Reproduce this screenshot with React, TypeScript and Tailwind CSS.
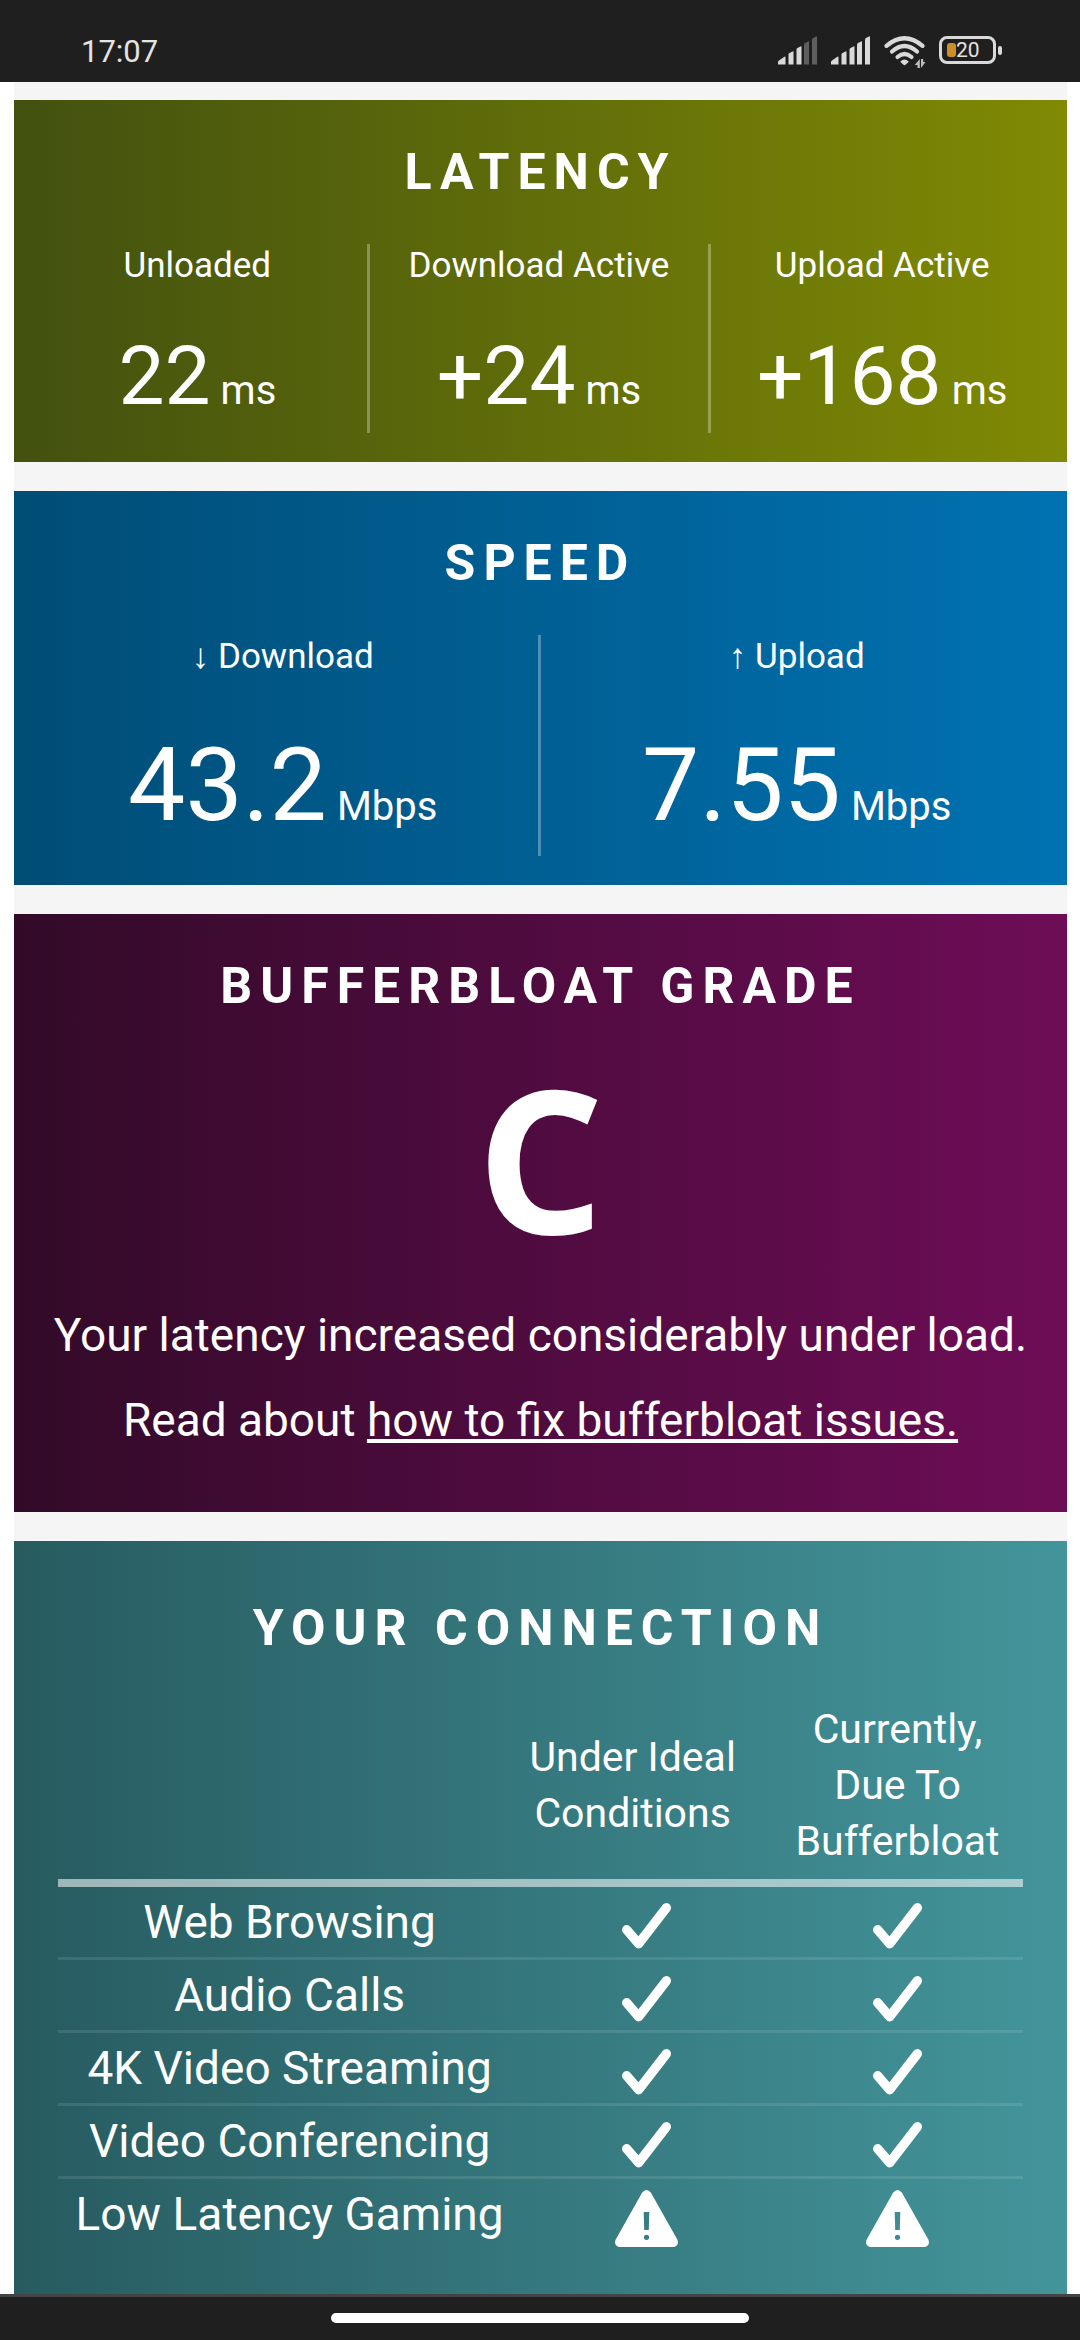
import type { ReactNode } from "react";

type Metric = { label: string; value: string };

const latency: Metric[] = [
  { label: "Unloaded", value: "22" },
  { label: "Download Active", value: "+24" },
  { label: "Upload Active", value: "+168" },
];

const speed: Metric[] = [
  { label: "↓ Download", value: "43.2" },
  { label: "↑ Upload", value: "7.55" },
];

const activities = [
  { name: "Web Browsing", ideal: true, current: true },
  { name: "Audio Calls", ideal: true, current: true },
  { name: "4K Video Streaming", ideal: true, current: true },
  { name: "Video Conferencing", ideal: true, current: true },
  { name: "Low Latency Gaming", ideal: false, current: false },
];

function Signal({ weak = false }: { weak?: boolean }) {
  const dim = weak ? "#5e5e5e" : "#d9d9d9";
  return (
    <svg width="40" height="30" viewBox="0 0 40 30" fill="#d9d9d9" aria-hidden="true">
      <path d="M0 28.5V26q0-1 1-1.500L6 21q1.500-1 1.500.5v7Z" />
      <path d="M10.500 28.500V18.500q0-1 1-1.500l3-1.500q1-.5 1 .5v12.500Z" />
      <path d="M18.500 28.500V13.500q0-1 1-1.500l3-1.500q1-.5 1 .5v17.500Z" />
      <path fill={dim} d="M26 28.500V8.500q0-1 1-1.500l3-1.500q1-.5 1 .5v22.500Z" />
      <path fill={dim} d="M34 28.500V3.500q0-1 1-1.500l3-1.500q1-.5 1 .5v27.500Z" />
    </svg>
  );
}

function Wifi() {
  return (
    <svg width="42" height="34" viewBox="0 0 42 34" fill="none" stroke="#d9d9d9" strokeLinecap="round" aria-hidden="true">
      <path strokeWidth="4.200" d="M2.500 9.800Q20.500-5.400 38.500 9.800" />
      <path strokeWidth="4.200" d="M8 15.500Q20.500 4.500 33 15.500" />
      <path strokeWidth="4.200" d="M13.500 21Q20.500 15 27.500 21" />
      <path fill="#d9d9d9" stroke="none" d="M16.200 25.700q4.300-4.200 8.600 0L21.500 28.800q-1 .9-2 0Z" />
      <path fill="#bdbdbd" stroke="none" d="M35.800 23v9h-2.300v-3h-2.800ZM37 32v-9h2.200v3h2.300Z" />
    </svg>
  );
}

function StatusBar() {
  return (
    <header className="flex h-[82px] items-start justify-between bg-[#1f1f1f] pr-[78px] pl-[81px] text-[#e4e4e4]">
      <time className="mt-8 text-[31px] leading-10">17:07</time>
      <div className="mt-9 flex items-start gap-[13px]">
        <Signal weak />
        <Signal />
        <Wifi />
        <div className="flex items-center gap-0.5">
          <div className="flex h-7 w-[57px] items-center rounded-[8px] border-3 border-[#d9d9d9] pl-[5px]">
            <span className="h-3.5 w-[9px] rounded-[3px] bg-[#cd8e28]" />
            <span className="text-[21px] leading-none">20</span>
          </div>
          <span className="h-[9px] w-1 rounded-[2px] bg-[#d9d9d9]" />
        </div>
      </div>
    </header>
  );
}

function Title({ children }: { children: ReactNode }) {
  return (
    <h2 className="text-center text-[50px] leading-[62px] font-bold tracking-[8px] uppercase">{children}</h2>
  );
}

function Check() {
  return (
    <svg className="mx-auto block" width="49" height="46" viewBox="0 0 49 46" fill="none" role="img" aria-label="Good">
      <path d="M4.700 26.800 16.700 40.700 44.300 4.800" stroke="#fff" strokeWidth="9.400" strokeLinecap="round" strokeLinejoin="round" />
    </svg>
  );
}

function Warning() {
  return (
    <svg className="mx-auto block" width="63" height="57" viewBox="0 0 63 57" fill="#fff" role="img" aria-label="Poor">
      <path
        fillRule="evenodd"
        d="M27.200 2.500Q31.500-2.500 35.800 2.500L62.300 49.500Q64.500 55.500 59 57H4Q-1.500 55.500.7 49.500ZM28.700 22H34.300L33.800 40H29.200ZM31.500 44.700a2.600 2.600 0 1 0 0 5.200a2.600 2.600 0 1 0 0-5.200Z"
      />
    </svg>
  );
}

export default function App() {
  return (
    <div className="flex min-h-screen flex-col bg-white font-['Roboto','Open_Sans',sans-serif] text-white">
      <StatusBar />

      <main className="mr-[13px] ml-3.5 flex flex-1 flex-col gap-[29px] bg-[#f5f5f5] pt-[18px]">
        {/* Latency */}
        <section className="bg-linear-to-r/srgb from-[#42510f] to-[#808a04] px-3.5 pt-[41px] pb-[29px]">
          <Title>Latency</Title>
          <dl className="mt-[41px] grid grid-cols-3 divide-x-3 divide-white/30 text-center">
            {latency.map((m) => (
              <div key={m.label} className="pb-[9px]">
                <dt className="text-[35px] leading-[44px]">{m.label}</dt>
                <dd className="mt-10 text-[82px] leading-24 whitespace-nowrap">
                  {m.value}
                  <span className="ml-2.5 text-[40px] leading-none">ms</span>
                </dd>
              </div>
            ))}
          </dl>
        </section>

        {/* Speed */}
        <section className="bg-linear-to-r/srgb from-[#004d76] to-[#0072b2] px-3.5 pt-[41px] pb-[29px]">
          <Title>Speed</Title>
          <dl className="mt-[41px] grid grid-cols-2 divide-x-3 divide-white/30 text-center">
            {speed.map((m) => (
              <div key={m.label} className="pb-[11px]">
                <dt className="text-[35px] leading-[44px]">{m.label}</dt>
                <dd className="mt-[46px] text-[102px] leading-30 whitespace-nowrap">
                  {m.value}
                  <span className="ml-2.5 text-[40px] leading-none">Mbps</span>
                </dd>
              </div>
            ))}
          </dl>
        </section>

        {/* Grade */}
        <section className="bg-linear-to-r/srgb from-[#320a28] to-[#6e0d57] px-3.5 pt-[41px] pb-[49px] text-center">
          <Title>Bufferbloat Grade</Title>
          <p className="mt-10 font-['Open_Sans','Roboto',sans-serif] text-[200px] leading-none font-bold">C</p>
          <div className="mt-9 text-[46px] leading-[85px]">
            <p>Your latency increased considerably under load.</p>
            <p>
              Read about{" "}
              <a href="#fix" className="underline decoration-4 underline-offset-3">
                how to fix bufferbloat issues.
              </a>
            </p>
          </div>
        </section>

        {/* Connection */}
        <section className="flex-1 bg-linear-to-r/srgb from-[#275b60] to-[#43959b] px-11 pt-14 pb-[42px]">
          <Title>Your Connection</Title>
          <table className="mt-[42px] w-full table-fixed border-separate border-spacing-0 text-center">
            <thead>
              <tr className="text-[41px] leading-14 *:border-b-8 *:border-white/55 *:pb-2.5 *:font-normal">
                <td className="w-[48%]" />
                <th scope="col" className="w-[26%] pr-7">
                  Under Ideal Conditions
                </th>
                <th scope="col" className="w-[26%]">
                  Currently,
                  <br />
                  Due To
                  <br />
                  Bufferbloat
                </th>
              </tr>
            </thead>
            <tbody className="*:not-last:*:border-b-3 *:*:border-white/10">
              {activities.map((a) => (
                <tr key={a.name}>
                  <th scope="row" className="text-[46px] leading-[70px] font-normal whitespace-nowrap">
                    {a.name}
                  </th>
                  <td className="pt-2">{a.ideal ? <Check /> : <Warning />}</td>
                  <td className="pt-2">{a.current ? <Check /> : <Warning />}</td>
                </tr>
              ))}
            </tbody>
          </table>
        </section>
      </main>

      <footer className="flex h-[46px] justify-center border-t-3 border-[#444] bg-[#1f1f1f] pt-4">
        <span className="h-2.5 w-[418px] rounded-full bg-white" />
      </footer>
    </div>
  );
}
